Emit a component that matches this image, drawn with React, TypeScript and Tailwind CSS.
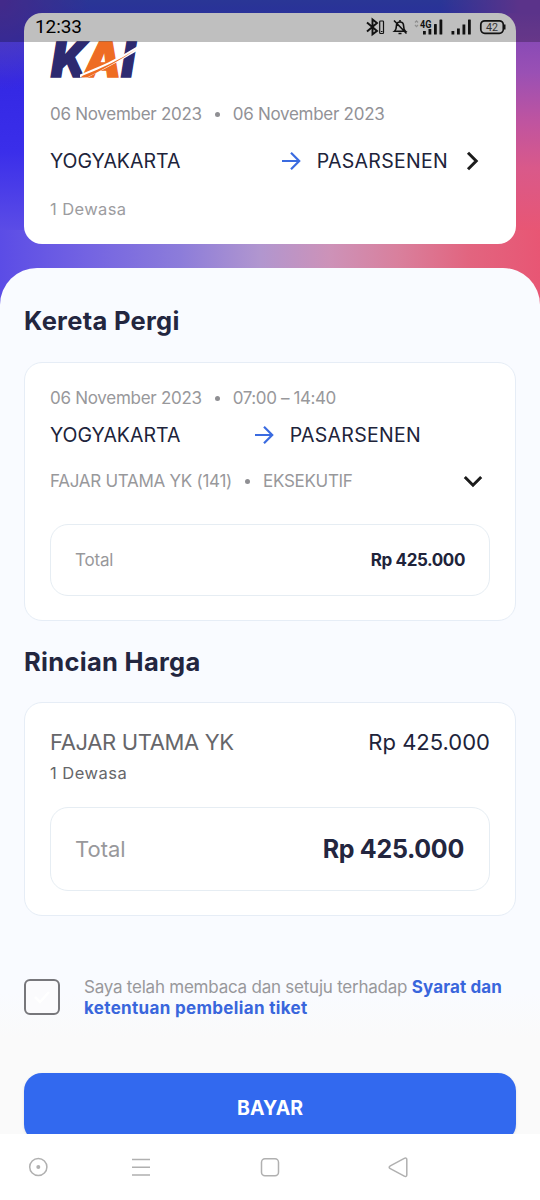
import { useState } from 'react';
import type { ReactNode } from 'react';
import clsx from 'clsx';

const PRICE = 'Rp 425.000';

function ArrowRight() {
  return (
    <svg width="20" height="20" viewBox="0 0 20 20" fill="none" stroke="#3a6be0" strokeWidth="2.2" className="mb-[2px] shrink-0">
      <path d="M1 10h17M10 1.800 18.200 10 10 18.200" />
    </svg>
  );
}

function Chevron({ down = false }: { down?: boolean }) {
  return (
    <svg
      width="20"
      height="20"
      viewBox="0 0 20 20"
      fill="none"
      stroke="#1c1c1c"
      strokeWidth="3"
      className={clsx('mb-[2px] shrink-0', down && 'rotate-90')}
    >
      <path d="m6 1.800 8.200 8.200L6 18.200" />
    </svg>
  );
}

function Dot() {
  return <span className="mx-[13px] mb-[2px] size-[5px] shrink-0 rounded-full bg-[#8f8f93]" />;
}

function KaiLogo() {
  return (
    <svg width="90" height="38" viewBox="0 0 90 38" className="block overflow-visible" aria-label="KAI">
      <text
        x="1"
        y="37.5"
        fontFamily="Inter, 'Liberation Sans', sans-serif"
        fontWeight="900"
        fontStyle="italic"
        fontSize="48"
        strokeWidth="1.400"
        textLength="84"
        lengthAdjust="spacingAndGlyphs"
      >
        <tspan fill="#2d2a70" stroke="#2d2a70">K</tspan>
        <tspan dx="-3" fill="#ee6c23" stroke="#ee6c23">A</tspan>
        <tspan fill="#2d2a70" stroke="#2d2a70">I</tspan>
      </text>
      {/* rail swoosh */}
      <path d="M30 35.500C48 28.500 68 19.500 87 7.500v4.500C69 22.500 54 30 38 38.500h-8z" fill="#fff" />
      <path d="M33 36.500C52 29 70 20.500 86 10.200 70 21.500 54 29.500 38 38h-7z" fill="#ee6c23" />
    </svg>
  );
}

function StatusBar() {
  return (
    <div className="absolute inset-x-0 top-0 z-10 flex h-[42px] items-start bg-black/25 pt-[14px] pr-[33px] pl-[35px] text-black">
      <span className="mt-[1px] text-[19px] leading-6 tracking-[-0.1px] font-[Roboto,sans-serif]">12:33</span>
      <svg width="142" height="26" viewBox="365 14 142 26" fill="none" stroke="#111" className="ml-auto">
        <path d="m367 22.500 10 8.500-4.500 3.300V19.500l4.500 3.500-10 8.500" strokeWidth="1.900" />
        <rect x="379.700" y="21" width="3.800" height="12.500" rx=".8" strokeWidth="1.200" />
        <path d="M381 31.500h1.500" strokeWidth="1" />
        <path
          d="M394.500 31.300h11c-1.700-1.500-1.900-3-1.900-5.300 0-2.400-1.500-4-3.600-4s-3.600 1.600-3.600 4c0 2.300-.2 3.800-1.900 5.300zM400 20v2m-1.500 11.500h3M394 20.500l12.500 13"
          strokeWidth="1.600"
        />
        <path d="m415 22.500 1.500-1.700 1.500 1.700m-3 2.500 1.500 1.700 1.500-1.700" stroke="#8f8f8f" strokeWidth="1.200" />
        <text x="420" y="28" fontSize="10" fontWeight="700" fontFamily="Roboto, sans-serif" fill="#111" stroke="none" textLength="11.500" lengthAdjust="spacingAndGlyphs">4G</text>
        <g fill="#111" stroke="none">
          <rect x="423" y="31" width="2.800" height="3.500" />
          <rect x="428.500" y="29" width="2.800" height="5.500" />
          <rect x="434" y="24" width="2.800" height="10.500" rx=".6" />
          <rect x="439.500" y="19.500" width="2.800" height="15" rx=".6" />
          <rect x="451.500" y="31" width="2.800" height="3.500" />
          <rect x="457" y="28.500" width="2.800" height="6" />
          <rect x="462.500" y="24.500" width="2.800" height="10" />
          <rect x="468" y="19.500" width="2.800" height="15" rx=".6" />
        </g>
        <rect x="480.800" y="20.800" width="22.500" height="12.500" rx="4" strokeWidth="1.700" />
        <path d="M504.700 24.500v5" strokeWidth="1.600" />
        <text x="486" y="31" fontSize="11" fontFamily="Roboto, sans-serif" fill="#333" stroke="none" textLength="12" lengthAdjust="spacingAndGlyphs">42</text>
      </svg>
    </div>
  );
}

function SectionTitle({ children }: { children: ReactNode }) {
  return <h2 className="text-[25.500px] leading-8 font-bold tracking-[0.3px] text-[#23263f]">{children}</h2>;
}

function Card({ className, children }: { className?: string; children: ReactNode }) {
  return (
    <section className={clsx('rounded-[18px] border border-[#e6edf6] bg-white px-[25px]', className)}>
      {children}
    </section>
  );
}

function TripSummary() {
  return (
    <section className="mx-6 flex h-[231px] flex-col rounded-[18px] bg-white pt-[26px] pr-[34px] pl-[26px]">
      <KaiLogo />
      <div className="mt-[26px] flex h-6 items-center text-[17px] text-[#929297]">
        <span className="tracking-[-0.28px]">06 November 2023</span>
        <Dot />
        <span className="tracking-[-0.28px]">06 November 2023</span>
      </div>
      <div className="mt-[23px] flex h-6 items-center text-[19.500px] text-[#20233a]">
        <span>YOGYAKARTA</span>
        <span className="ml-auto mr-[16px] flex"><ArrowRight /></span>
        <span className="tracking-[0.3px]">PASARSENEN</span>
        <span className="ml-[14px] flex"><Chevron /></span>
      </div>
      <div className="mt-[23px] flex h-6 items-center text-[16.500px] tracking-[0.4px] text-[#9c9ca0]">1 Dewasa</div>
    </section>
  );
}

function DepartureCard() {
  return (
    <Card className="mt-[25px] h-[259px] pt-6">
      <div className="flex h-6 items-center text-[17px] tracking-[-0.28px] text-[#98989b]">
        <span>06 November 2023</span>
        <Dot />
        <span className="tracking-[-0.4px]">07:00 – 14:40</span>
      </div>
      <div className="mt-[13px] flex h-6 items-center pr-[69px] text-[19.500px] text-[#20233a]">
        <span>YOGYAKARTA</span>
        <span className="ml-auto mr-[16px] flex"><ArrowRight /></span>
        <span className="tracking-[0.3px]">PASARSENEN</span>
      </div>
      <div className="mt-[22px] flex h-6 items-center pr-[7px] text-[17px] text-[#98989b]">
        <span className="tracking-[-0.27px]">FAJAR UTAMA YK (141)</span>
        <Dot />
        <span className="tracking-[-0.3px]">EKSEKUTIF</span>
        <span className="ml-auto flex"><Chevron down /></span>
      </div>
      <div className="mt-[30px] flex h-[72px] items-center justify-between rounded-[18px] border border-[#e6edf3] px-6 pt-[1px] text-[17px]">
        <span className="tracking-[-0.2px] text-[#98989b]">Total</span>
        <span className="font-bold tracking-[-0.4px] text-[#20233a]">{PRICE}</span>
      </div>
    </Card>
  );
}

function PriceCard() {
  return (
    <Card className="mt-6 h-[214px] pt-[24px]">
      <div className="flex h-[30px] items-center justify-between text-[22px]">
        <span className="tracking-[-0.35px] text-[#66666a]">FAJAR UTAMA YK</span>
        <span className="text-[#20233a]">{PRICE}</span>
      </div>
      <div className="mt-[4px] flex h-6 items-center text-[16.500px] tracking-[0.5px] text-[#66666a]">1 Dewasa</div>
      <div className="mt-[22px] flex h-[84px] items-center justify-between rounded-[18px] border border-[#e6edf3] pr-[25px] pl-[24px]">
        <span className="text-[22px] text-[#98989b]">Total</span>
        <span className="mt-[2px] text-[25px] font-bold tracking-[-0.3px] text-[#23263f]">{PRICE}</span>
      </div>
    </Card>
  );
}

function Agreement() {
  const [checked, setChecked] = useState(false);

  return (
    <div className="mt-[61px] flex">
      <button
        onClick={() => setChecked(!checked)}
        className={clsx(
          'mt-[2px] flex size-9 shrink-0 items-center justify-center rounded-[6px] border-2 border-[#77777b]',
          checked ? 'bg-[#3269ef]' : 'bg-[#fbfbfd]',
        )}
      >
        <svg width="18" height="14" viewBox="0 0 18 14" fill="none" stroke="#fff" strokeWidth="2.500">
          <path d="m2 7 5 5L16 2" />
        </svg>
      </button>
      <p className="ml-6 text-[17px] leading-[21px] tracking-[-0.23px] whitespace-nowrap text-[#98989b]">
        Saya telah membaca dan setuju terhadap{' '}
        <b className="font-bold tracking-[0.1px] text-[#3966dc]">Syarat dan</b>
        <br />
        <b className="font-bold tracking-[0.33px] text-[#3966dc]">ketentuan pembelian tiket</b>
      </p>
    </div>
  );
}

function NavBar() {
  return (
    <nav className="h-[66px] bg-white">
      <svg width="540" height="66" viewBox="0 1134 540 66" fill="none" stroke="#b0b0b0" strokeWidth="1.500">
        <circle cx="38.300" cy="1167" r="8.600" />
        <circle cx="38.300" cy="1167" r="2" fill="#b0b0b0" stroke="none" />
        <path d="M132 1159.500h18M132 1167.200h18M132 1175h18" />
        <rect x="261.500" y="1158.700" width="17" height="17" rx="3.500" />
        <path d="M404.300 1158.300c1.300-.7 2.500-.2 2.500 1.200v15.500c0 1.400-1.200 1.900-2.500 1.200l-14-7.500c-1.500-.8-1.500-2 0-2.800z" />
      </svg>
    </nav>
  );
}

export default function App() {
  return (
    <div className="h-[1200px] w-[540px] overflow-hidden bg-white font-[Inter,'Liberation_Sans',sans-serif]">
      <main className="relative h-[1134px] overflow-hidden">
        <StatusBar />
        {/* the strip under the card fades from periwinkle to rose, the side strip from violet to rose */}
        <header className="h-[310px] bg-[linear-gradient(90deg,#5b4ce6_0px,#7464e2_90px,#8c7cda_180px,#b196cf_260px,#cd92b8_330px,#d97f9c_400px,#e2647f_470px,#e85674_540px)]">
          <div className="h-[230px] bg-[radial-gradient(circle_at_0px_0px,#5a38b8_0px,transparent_90px),linear-gradient(90deg,transparent_440px,#7a45b8_520px),linear-gradient(#3848c8_0px,#3428e4_80px,#3a2eea_150px,#5b4ce6_230px)] pt-[13px]">
            <div className="h-[217px] bg-[linear-gradient(#7a45b8_0px,#9a50b4_60px,#c0549f_110px,#d9598a_155px,#e85674_217px)] bg-[length:32px_100%] bg-right bg-no-repeat">
              <TripSummary />
            </div>
          </div>
        </header>
        <div className="-mt-[42px] h-[900px] rounded-t-[37px] bg-[linear-gradient(#f9fbff_0px,#f9fbff_725px,#fafafa_770px)] px-6 pt-[37px]">
          <SectionTitle>Kereta Pergi</SectionTitle>
          <DepartureCard />
          <div className="mt-[25px]">
            <SectionTitle>Rincian Harga</SectionTitle>
          </div>
          <PriceCard />
          <Agreement />
          <button className="mt-[54px] block h-[69px] w-full rounded-[18px] bg-[#3269ef] text-[19.500px] leading-[71px] font-bold text-white shadow-sm">
            BAYAR
          </button>
        </div>
      </main>
      <NavBar />
    </div>
  );
}
